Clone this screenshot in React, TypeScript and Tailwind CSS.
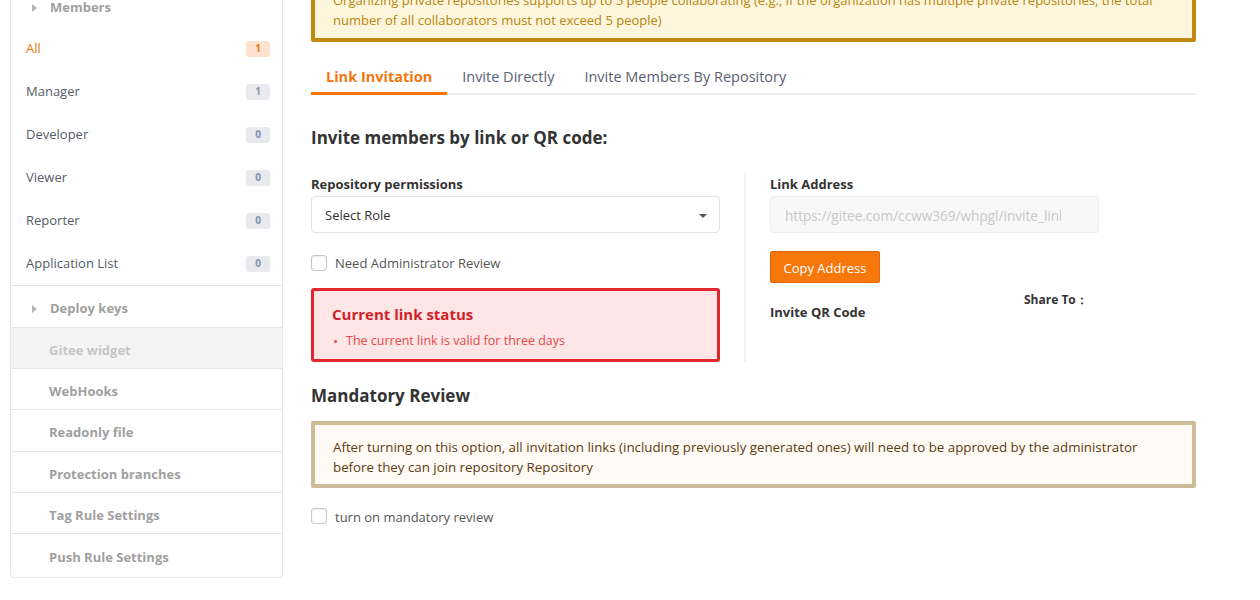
const roleCounts = [
  { name: "All", count: 1, active: true },
  { name: "Manager", count: 1 },
  { name: "Developer", count: 0 },
  { name: "Viewer", count: 0 },
  { name: "Reporter", count: 0 },
  { name: "Application List", count: 0 },
]

const settingLinks = [
  { name: "WebHooks", h: "h-[41px]" },
  { name: "Readonly file", h: "h-[42px]" },
  { name: "Protection branches", h: "h-[41px]" },
  { name: "Tag Rule Settings", h: "h-[41px]" },
  { name: "Push Rule Settings", h: "h-[43px]", last: true },
]

function Caret() {
  return <span className="inline-block w-0 h-0 border-y-[4px] border-y-transparent border-l-[5px] border-l-[#b5b5b5] mr-[13px]" />
}

function Checkbox() {
  return <span className="inline-block w-[16px] h-[16px] rounded-[3px] border border-[#c8c8c8] bg-white shadow-[inset_0_1px_2px_rgba(0,0,0,0.08)]" />
}

function Sidebar() {
  return (
    <aside className="w-[273px] shrink-0 border border-[#e6e6e6] rounded-b-[4px] bg-white">
      {/* Members group */}
      <div className="h-[48px] pt-[10px] flex items-center pl-[21px] text-[13px] font-bold text-[#a0a0a0]">
        <Caret />
        Members
      </div>
      <div className="border-b border-[#e6e6e6]">
        {roleCounts.map((r) => (
          <div key={r.name} className="h-[43px] flex items-center justify-between pl-[15px] pr-[12px]">
            <span className={r.active ? "text-[13px] text-[#f6750b]" : "text-[13px] text-[#555b66]"}>{r.name}</span>
            <span
              className={
                r.active
                  ? "w-[24px] h-[16px] rounded-[3px] bg-[#fde3cf] text-[#f6750b] text-[10px] font-bold flex items-center justify-center"
                  : "w-[24px] h-[16px] rounded-[3px] bg-[#e8eaee] text-[#8392ad] text-[10px] font-bold flex items-center justify-center"
              }
            >
              {r.count}
            </span>
          </div>
        ))}
      </div>
      <div className="h-[42px] pt-[4px] flex items-center pl-[21px] text-[13px] font-bold text-[#a0a0a0] border-b border-[#e6e6e6]">
        <Caret />
        Deploy keys
      </div>
      <div className="h-[41px] pt-[5px] flex items-center pl-[38px] text-[13px] font-bold text-[#c6c6c6] bg-[#f4f4f4] border-b border-[#e6e6e6]">
        Gitee widget
      </div>
      {settingLinks.map((s) => (
        <div
          key={s.name}
          className={`${s.h} pt-[5px] flex items-center pl-[38px] text-[13px] font-bold text-[#a0a0a0] ${s.last ? "" : "border-b border-[#e6e6e6]"}`}
        >
          {s.name}
        </div>
      ))}
    </aside>
  )
}

export default function App() {
  return (
    <div className="bg-white min-h-[600px] font-['Open_Sans',sans-serif] text-[#333]">
      <div className="flex items-start -mt-[22px] pl-[10px]">
        <Sidebar />

        <main className="ml-[28px] w-[885px]">
          {/* Collaborator limit notice */}
          <div className="border-4 border-[#bf8a0f] bg-[#fef6dc] rounded-[2px] px-[18px] py-[8px] text-[13px] leading-[20px] text-[#b5850c]">
            Organizing private repositories supports up to 5 people collaborating (e.g., if the organization has multiple private repositories, the total number of all collaborators must not exceed 5 people)
          </div>

          {/* Tabs */}
          <div className="mt-[20px] flex border-b-2 border-[#e8ecf1]">
            <div className="-mb-[2px] px-[15px] pt-[5px] pb-[5px] border-b-[3px] border-[#f6750b] text-[14.5px] leading-[20px] font-bold text-[#f6750b]">
              Link Invitation
            </div>
            <div className="-mb-[2px] px-[15px] pt-[5px] pb-[5px] border-b-[3px] border-transparent text-[14.5px] leading-[20px] text-[#5a6170]">
              Invite Directly
            </div>
            <div className="-mb-[2px] px-[15px] pt-[5px] pb-[5px] border-b-[3px] border-transparent text-[14.5px] leading-[20px] text-[#5a6170]">
              Invite Members By Repository
            </div>
          </div>

          <h2 className="mt-[31px] text-[17px] leading-[24px] font-bold text-[#333]">Invite members by link or QR code:</h2>

          <div className="mt-[22px] flex">
            {/* Left column */}
            <div className="w-[409px] pt-[2px]">
              <div className="text-[13px] leading-[20px] font-bold text-[#333]">Repository permissions</div>
              <div className="mt-[2px] h-[37px] pt-[3px] border border-[#e3e3e3] rounded-[4px] flex items-center justify-between pl-[13px] pr-[12px] text-[13px] text-[#333]">
                <span>Select Role</span>
                <span className="w-0 h-0 border-x-[4px] border-x-transparent border-t-[4px] border-t-[#555]" />
              </div>
              <label className="mt-[20px] h-[20px] flex items-center gap-[8px] text-[13px] text-[#555]">
                <Checkbox />
                <span className="pt-[2px]">Need Administrator Review</span>
              </label>
              <div className="mt-[15px] border-[3px] border-[#e1282e] rounded-[3px] bg-[#fee6e6] pl-[18px] pr-[18px] pt-[12px] pb-[8px]">
                <div className="text-[15px] leading-[22px] font-bold text-[#d21f28]">Current link status</div>
                <ul className="mt-[6px] text-[12.5px] leading-[20px] text-[#e4474c]">
                  <li className="flex items-center gap-[9px] pl-[2px]">
                    <span className="w-[3px] h-[3px] rounded-full bg-[#e4474c]" />
                    The current link is valid for three days
                  </li>
                </ul>
              </div>
            </div>

            <div className="mx-[24px] w-[2px] bg-[#f0f2f5] self-stretch" />

            {/* Right column */}
            <div className="flex-1 pt-[2px]">
              <div className="text-[13px] leading-[20px] font-bold text-[#333]">Link Address</div>
              <div className="mt-[2px] w-[329px] h-[37px] pt-[3px] border border-[#eeeeee] rounded-[3px] bg-[#f8f8f8] pl-[14px] pr-[37px] flex items-center">
                <span className="text-[13.6px] text-[#c8c8c8] whitespace-nowrap overflow-hidden">https://gitee.com/ccww369/whpgl/invite_link</span>
              </div>
              <button className="mt-[18px] w-[110px] h-[32px] pt-[3px] bg-[#f7780a] border border-[#e0680a] rounded-[2px] text-white text-[13px]">
                Copy Address
              </button>
              <div className="mt-[7px] flex">
                <div className="w-[254px] pt-[12px] text-[13px] leading-[20px] font-bold text-[#333]">Invite QR Code</div>
                <div className="text-[12px] leading-[20px] font-bold text-[#333]">Share To：</div>
              </div>
            </div>
          </div>

          <h2 className="mt-[22px] text-[17px] leading-[24px] font-bold text-[#333]">Mandatory Review</h2>
          <div className="mt-[13px] border-4 border-[#cdbb9a] rounded-[2px] bg-[#fffaf3] px-[18px] pt-[12px] pb-[7px] text-[13.3px] leading-[20px] text-[#5b3b12]">
            After turning on this option, all invitation links (including previously generated ones) will need to be approved by the administrator before they can join repository Repository
          </div>
          <label className="mt-[18px] h-[20px] flex items-center gap-[8px] text-[13px] text-[#555]">
            <Checkbox />
            <span className="pt-[3px]">turn on mandatory review</span>
          </label>
        </main>
      </div>
    </div>
  )
}
